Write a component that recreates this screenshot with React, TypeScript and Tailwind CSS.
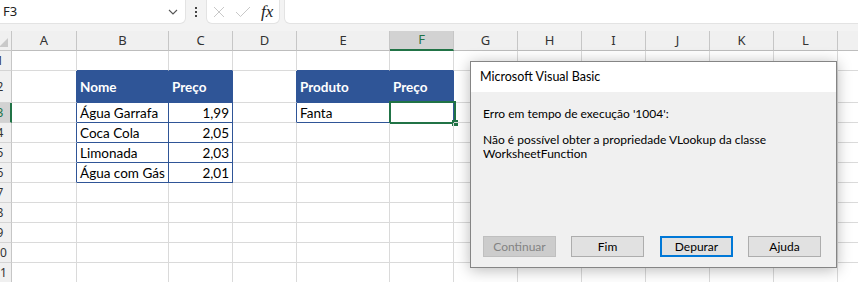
import React from 'react';

type Col = { letter: string; w: number };

const cols: Col[] = [
  { letter: 'A', w: 65 },
  { letter: 'B', w: 92 },
  { letter: 'C', w: 64 },
  { letter: 'D', w: 64 },
  { letter: 'E', w: 93 },
  { letter: 'F', w: 64 },
  { letter: 'G', w: 64 },
  { letter: 'H', w: 64 },
  { letter: 'I', w: 64 },
  { letter: 'J', w: 64 },
  { letter: 'K', w: 64 },
  { letter: 'L', w: 64 },
  { letter: 'M', w: 64 },
];

const rows = [1, 2, 3, 4, 5, 6, 7, 8, 9, 10, 11];

const cells: Record<string, { v: string; right?: boolean; head?: boolean }> = {
  B2: { v: 'Nome', head: true },
  C2: { v: 'Preço', head: true },
  B3: { v: 'Água Garrafa' },
  C3: { v: '1,99', right: true },
  B4: { v: 'Coca Cola' },
  C4: { v: '2,05', right: true },
  B5: { v: 'Limonada' },
  C5: { v: '2,03', right: true },
  B6: { v: 'Água com Gás' },
  C6: { v: '2,01', right: true },
  E2: { v: 'Produto', head: true },
  F2: { v: 'Preço', head: true },
  E3: { v: 'Fanta' },
};

// tables as [firstCol, lastCol, firstRow, lastRow]
const tables: [number, number, number, number][] = [
  [1, 2, 2, 6],
  [4, 5, 2, 3],
];

const inTable = (c: number, r: number) =>
  tables.some(([c1, c2, r1, r2]) => c >= c1 && c <= c2 && r >= r1 && r <= r2);

const selCol = 5;
const selRow = 3;

const TopBar: React.FC = () => (
  <div className="h-[31px] bg-[#f3f3f3] flex items-start">
    <div className="w-[185px] h-[23px] bg-white rounded-br-[5px] flex items-center justify-between pl-[3px] pr-[7px] shadow-[0_0_0_1px_#e3e3e3]">
      <span className="text-[13px] text-[#222] font-['Noto_Sans',sans-serif]">F3</span>
      <svg width="10" height="6" viewBox="0 0 10 6" fill="none">
        <path d="M1 1l4 4 4-4" stroke="#555" strokeWidth="1.1" />
      </svg>
    </div>
    <div className="w-[22px] h-[23px] flex items-center justify-center">
      <div className="flex flex-col gap-[2px]">
        <span className="w-[2px] h-[2px] bg-[#444]" />
        <span className="w-[2px] h-[2px] bg-[#444]" />
        <span className="w-[2px] h-[2px] bg-[#444]" />
      </div>
    </div>
    <div className="w-[72px] h-[23px] bg-white rounded-b-[5px] flex items-center pl-[5px] shadow-[0_0_0_1px_#e3e3e3]">
      <svg width="14" height="14" viewBox="0 0 14 14" fill="none" className="mr-[9px]">
        <path d="M2 2l10 10M12 2L2 12" stroke="#c8c8c8" strokeWidth="1" />
      </svg>
      <svg width="16" height="14" viewBox="0 0 16 14" fill="none" className="mr-[10px]">
        <path d="M1 7l4.5 4.5L15 2" stroke="#c8c8c8" strokeWidth="1" />
      </svg>
      <span className="text-[17px] italic text-[#222] font-['Liberation_Serif',serif] leading-none">fx</span>
    </div>
    <div className="ml-[6px] flex-1 h-[23px] bg-white rounded-bl-[5px] shadow-[0_0_0_1px_#e3e3e3]" />
  </div>
);

const RowHead: React.FC<{ n: number; h: string }> = ({ n, h }) => {
  const sel = n === selRow;
  return (
    <div
      className={`${h} w-[12px] shrink-0 overflow-hidden border-b border-[#d4d4d4] ${
        sel ? 'bg-[#d2d2d2] border-r-2 border-r-[#217346]' : 'bg-[#f0f0f0] border-r border-r-[#c6c6c6]'
      }`}
    >
      <div
        className={`w-[28px] ml-[-14px] h-full flex items-center justify-center text-[12px] font-['Noto_Sans',sans-serif] ${
          sel ? 'text-[#217346]' : 'text-[#333]'
        }`}
      >
        {n}
      </div>
    </div>
  );
};

const Grid: React.FC = () => (
  <div className="font-['Lato',sans-serif]">
    {/* column headers */}
    <div className="flex h-[20px]">
      <div className="w-[12px] shrink-0 relative bg-[#f0f0f0] border-r border-b border-[#c6c6c6]">
        <div className="absolute right-[3px] bottom-[3px] w-0 h-0 border-l-[9px] border-l-transparent border-b-[9px] border-b-[#c9c9c9]" />
      </div>
      {cols.map((c, i) => (
        <div
          key={c.letter}
          style={{ width: c.w }}
          className={`shrink-0 flex items-center justify-center text-[13px] font-['Noto_Sans',sans-serif] border-r border-[#c6c6c6] ${
            i === selCol
              ? 'bg-[#d2d2d2] text-[#217346] border-b-2 border-b-[#217346]'
              : 'bg-[#f0f0f0] text-[#333] border-b border-b-[#bdbdbd]'
          }`}
        >
          {c.letter}
        </div>
      ))}
    </div>
    {rows.map((r) => {
      const h = r === 2 ? 'h-[32px]' : 'h-[20px]';
      return (
        <div key={r} className="flex">
          <RowHead n={r} h={h} />
          {cols.map((c, i) => {
            const key = `${c.letter}${r}`;
            const cell = cells[key];
            const blueR = inTable(i, r) || inTable(i + 1, r);
            const blueB = inTable(i, r) || inTable(i, r + 1);
            const head = cell?.head;
            return (
              <div
                key={key}
                style={{ width: c.w }}
                className={`${h} shrink-0 relative flex items-center px-[3px] text-[13.5px] whitespace-nowrap border-r border-b ${
                  blueR ? 'border-r-[#2f5597]' : 'border-r-[#dadada]'
                } ${blueB ? 'border-b-[#2f5597]' : 'border-b-[#dadada]'} ${
                  head ? 'bg-[#2f5597] text-white font-bold pt-[1px]' : 'text-black pt-[2px]'
                } ${cell?.right ? 'justify-end' : ''}`}
              >
                {cell?.v}
                {i === selCol && r === selRow && (
                  <div className="absolute left-[-1px] top-[-2px] w-[67px] h-[23px] border-2 border-[#217346]">
                    <div className="absolute right-[-4px] bottom-[-4px] w-[6px] h-[6px] bg-[#217346]" />
                  </div>
                )}
              </div>
            );
          })}
        </div>
      );
    })}
  </div>
);

const Btn: React.FC<{ label: string; disabled?: boolean; focus?: boolean; cls?: string }> = ({
  label,
  disabled,
  focus,
  cls,
}) => (
  <div
    className={`w-[73px] h-[21px] flex items-center justify-center text-[12px] ${cls ?? ''} ${
      disabled
        ? 'bg-[#cccccc] border border-[#bfbfbf] text-[#838383]'
        : focus
        ? 'bg-[#e1e1e1] border-2 border-[#0078d7] text-black'
        : 'bg-[#e1e1e1] border border-[#adadad] text-black'
    }`}
  >
    {label}
  </div>
);

const Dialog: React.FC = () => (
  <div className="absolute left-[470px] top-[61px] w-[367px] h-[207px] border border-[#858585] bg-[#f0f0f0] flex flex-col shadow-[0_2px_14px_rgba(0,0,0,0.28)] font-['Lato',sans-serif] text-black">
    <div className="h-[30px] bg-white flex items-center pl-[9px] text-[12.5px]">Microsoft Visual Basic</div>
    <div className="flex-1 flex flex-col pl-[12px] pt-[15px] text-[12px] leading-[14px]">
      <div>Erro em tempo de execução '1004':</div>
      <div className="mt-[12px]">Não é possível obter a propriedade VLookup da classe</div>
      <div>WorksheetFunction</div>
      <div className="mt-auto mb-[10px] flex">
        <Btn label="Continuar" disabled />
        <Btn label="Fim" cls="ml-[15px]" />
        <Btn label="Depurar" focus cls="ml-[16px]" />
        <Btn label="Ajuda" cls="ml-[15px]" />
      </div>
    </div>
  </div>
);

const App: React.FC = () => {
  return (
    <div className="relative w-[858px] h-[282px] overflow-hidden bg-white">
      <TopBar />
      <Grid />
      <Dialog />
    </div>
  );
};

export default App;
